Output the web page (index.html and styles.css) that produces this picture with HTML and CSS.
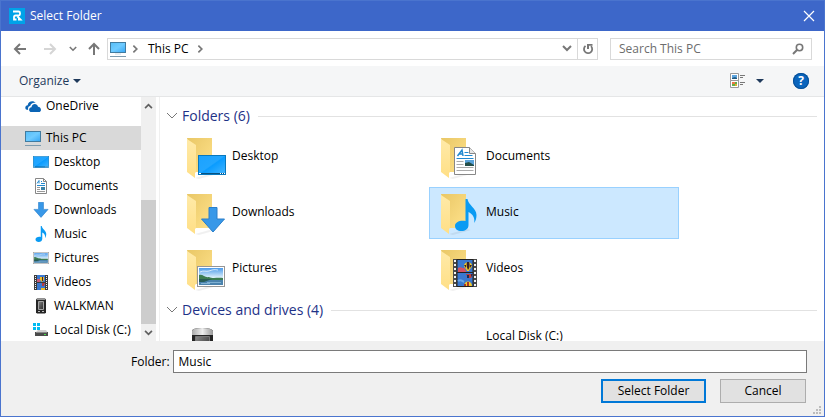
FILE: index.html
```html
<!DOCTYPE html>
<html lang="en">
<head>
<meta charset="utf-8">
<title>Select Folder</title>
<link rel="stylesheet" href="styles.css">
</head>
<body>
<svg class="defs" aria-hidden="true">
  <defs>
    <linearGradient id="g-screen" x1="0" y1="0" x2="1" y2="1"><stop offset="0" stop-color="#55bdf7"/><stop offset=".5" stop-color="#6fcbff"/><stop offset="1" stop-color="#35a6f5"/></linearGradient>
    <linearGradient id="g-desk" x1="0" y1="0" x2="1" y2="1"><stop offset="0" stop-color="#1ba2ff"/><stop offset=".48" stop-color="#22a6ff"/><stop offset=".52" stop-color="#0a9cff"/><stop offset="1" stop-color="#46b6ff"/></linearGradient>
    <linearGradient id="g-back" x1="0" y1="0" x2="1" y2="1"><stop offset="0" stop-color="#e9c766"/><stop offset="1" stop-color="#ffe28b"/></linearGradient>
    <linearGradient id="g-front" x1="0" y1="0" x2="0" y2="1"><stop offset="0" stop-color="#ffeaa8"/><stop offset="1" stop-color="#ffdf86"/></linearGradient>
    <linearGradient id="g-sky" x1="0" y1="0" x2="0" y2="1"><stop offset="0" stop-color="#4b9bea"/><stop offset=".6" stop-color="#e6f5fd"/></linearGradient>
    <linearGradient id="g-phone" x1="0" y1="0" x2="1" y2="1"><stop offset="0" stop-color="#8a8a8a"/><stop offset=".5" stop-color="#555"/><stop offset="1" stop-color="#2c2c2c"/></linearGradient>
    <linearGradient id="g-cap" x1="0" y1="0" x2="1" y2="0"><stop offset="0" stop-color="#aaa"/><stop offset=".5" stop-color="#eee"/><stop offset="1" stop-color="#999"/></linearGradient>
  </defs>
  <symbol id="pc" viewBox="0 0 16 16">
    <rect x=".5" y="1.5" width="15" height="10" fill="url(#g-screen)" stroke="#417b9f"/>
    <path d="M5 13h6" stroke="#cddbe3"/><path d="M0 15.500h16" stroke="#7d9bae"/>
  </symbol>
  <symbol id="desktop" viewBox="0 0 28 20">
    <rect x=".5" y=".5" width="27" height="19" fill="url(#g-desk)" stroke="#0878bd"/>
    <path d="M1 18.500h26" stroke="#07517f"/><path d="M1 18.500h2m19 0h1m1 0h1m1 0h1" stroke="#fff"/>
  </symbol>
  <symbol id="document" viewBox="0 0 22 28">
    <path d="M.5.5h15l6 6v21H.5z" fill="#fff" stroke="#878787"/><path d="M15.500.5v6h6" fill="#e6e6e6" stroke="#878787"/>
    <path d="M3.500 9 8 3l1 6M5 7h4" stroke="#2189cf" stroke-width="1.500" fill="none"/>
    <path d="M10.500 5.500h4M10.500 8.500h8M2.500 11.500h17" stroke="#2189cf"/>
    <path d="M2.500 14.500h7M2.500 17.500h7M2.500 20.500h17M2.500 23.500h17" stroke="#aaa"/>
    <path d="M11 13h9v6h-9z" fill="#5aa3db"/><path d="m11 16 4-1 5 3v1h-9z" fill="#244f49"/>
  </symbol>
  <symbol id="document-small" viewBox="0 0 16 16">
    <path d="M2.500.5h8l3 3v12h-11z" fill="#fff" stroke="#878787"/><path d="M10.500.5v3h3" fill="none" stroke="#878787"/>
    <path d="m4 5.500 2-3v3M8 3.500h1M8 5.500h4M4 7.500h8" stroke="#2189cf" fill="none"/>
    <path d="M4 9.500h3M4 11.500h3M4 13.500h8" stroke="#999"/><path d="M8 9h4v3H8z" fill="#3b82a8"/>
  </symbol>
  <symbol id="download" viewBox="0 0 24 26">
    <path d="M8 .5h8V12h7.500L12 25 .5 12H8z" fill="#3898e8" stroke="#2a7fca"/>
  </symbol>
  <symbol id="note" viewBox="0 0 22 32">
    <path d="M10.500 0h2c.5 6 9 9 9 16 0 3-.8 6-2.300 8 1-6-2-9-5.700-11v13c0 4-3.500 6-7 6-4 0-6.500-2-6.500-5 0-4 5-6 10.500-5z" fill="#0a9bf3"/>
  </symbol>
  <symbol id="picture" viewBox="0 0 28 21">
    <rect x=".5" y=".5" width="27" height="20" fill="#fff" stroke="#969696"/>
    <path d="M2 2h24v17H2z" fill="url(#g-sky)"/>
    <path d="M3 6c4-2 6 0 9-1s5-2 9-1" stroke="#fff" fill="none" opacity=".7"/>
    <path d="M2 9c4-1 6 3 10 2 4 2 9 0 14 1v2H2z" fill="#3c7d52"/><path d="M2 14h24v5H2z" fill="#4b83ad"/><path d="M2 13h13l-8 3H2z" fill="#285c54"/>
    <path d="M10 16.500h14M4 17.500h9" stroke="#7fb0d2"/>
  </symbol>
  <symbol id="film" viewBox="0 0 24 28">
    <path d="M0 0h24v28H0z" fill="#4a4a4a"/>
    <path d="M2 1v27M22 1v27" stroke="#f4f4f4" stroke-width="2" stroke-dasharray="2 2"/>
    <path d="M4 1h16v12H4zM4 14h16v13H4z" fill="#3a78cf"/><path d="M4 0v28M20 0v28M4 .5h16M4 13.500h16M4 27.500h16" stroke="#222"/>
    <path d="M5 9c3-2 5 1 7 0l1 4H5z" fill="#d45162"/>
    <path d="M11 7c0-5 8-5 8 0 0 2-3 3-3 5h-2c0-2-3-3-3-5z" fill="#f2c929"/><path d="M14 3c-1 3 0 6 1 8 2-2 2-6 1-8zM11 6h2v3zM19 6h-2v3z" fill="#36212c"/>
    <path d="M13 15h7l-2 4h-3z" fill="#c43e35"/><path d="M14 16h2v3h-2zM18 15h2l-2 3z" fill="#232c52"/>
    <path d="M11 27c0-6 8-6 8 0z" fill="#f2c929"/><path d="M14 23h2v4h-2zM11 25h2v2h-2z" fill="#a5362c"/>
    <path d="M5 22c3-2 4 0 6 1" stroke="#68a6e6" stroke-width="2" fill="none"/>
  </symbol>
  <symbol id="film-small" viewBox="0 0 16 16">
    <path d="M1 1h14v15H1z" fill="#3c3c3c"/><path d="M2.500 2v14M13.500 2v14" stroke="#f4f4f4" stroke-dasharray="1 1"/>
    <path d="M4 1h8v7H4zM4 9h8v7H4z" fill="#3a78cf"/><path d="M4 5h3v3H4z" fill="#c95b78"/><path d="M7 3h4v3L9 8 7 6z" fill="#edbd29"/><path d="M9 3h1v4H9z" fill="#45252a"/><path d="M9 9h3l-1 3H9z" fill="#b43b42"/><path d="M8 14h4v2H8z" fill="#edbd29"/>
  </symbol>
  <symbol id="phone" viewBox="0 0 16 16">
    <path d="M3 1.500 4 .5h8l1 1v13l-1 1H4l-1-1z" fill="#252525"/><path d="M4 1.500h8" stroke="#999"/><path d="M5.500 3.500h5v8h-5z" fill="url(#g-phone)" stroke="#a5a5a5"/><path d="M5 13.500h2m2 0h2" stroke="#bbb"/>
  </symbol>
  <symbol id="disk" viewBox="0 0 16 16">
    <path d="M0 1h3v3H0zM4 1h3v3H4zM0 5h3v3H0zM4 5h3v3H4z" fill="#00bcf2"/>
    <path d="m4 9 1-1h8l2 3H2z" fill="#cfcfcf"/><path d="M2 10h13v4H2z" fill="#4b4b4b"/><path d="M3 10.500h11" stroke="#888"/><path d="M11 12.500h2" stroke="#4bdc4b"/>
  </symbol>
  <symbol id="cloud" viewBox="0 0 16 16">
    <path d="M1 11.500C-.5 9.500.6 7.500 2.700 7.300 3 3.500 8.200 1.700 10.700 5 8 4.300 5.600 5.700 5.200 8 3.300 8.200 2.700 10 3.200 12z" fill="#0b64b5"/>
    <path d="M5.500 14C3.300 13 3.800 9.300 6.500 9.200 7 5.300 12.200 5 13 8.800c3 .2 4 4 1.700 5.200z" fill="#0b64b5"/>
  </symbol>
  <symbol id="folder" viewBox="0 0 34 42">
    <path d="m8 40 18-5 4 1-18 5z" fill="#000" opacity=".06"/>
    <path d="M0 0h25v34H6z" fill="url(#g-back)"/><path d="m0 1 9 6v27l-1 1v5l-8-6z" fill="url(#g-front)"/>
  </symbol>
  <symbol id="chevron" viewBox="0 0 12 8"><path d="m1 1 5 5 5-5" fill="none" stroke="currentColor"/></symbol>
  <symbol id="chevron-bold" viewBox="0 0 10 7"><path d="m1 1 4 4 4-4" fill="none" stroke="currentColor" stroke-width="2"/></symbol>
  <symbol id="caret" viewBox="0 0 8 4"><path d="M0 0h8L4 4z" fill="currentColor"/></symbol>
  <symbol id="arrow" viewBox="0 0 14 12"><path d="M13 6H2m5-5L2 6l5 5" fill="none" stroke="currentColor" stroke-width="2"/></symbol>
</svg>

<div class="dialog">
  <header class="titlebar">
    <svg class="logo" viewBox="0 0 16 16"><path d="M0 0h16v16H0z" fill="#00a2e8"/><path d="M4 3.500h5.500q1.500 0 1.500 1.500v1q0 1.500-1.500 1.500H6.500Q5 7.500 5 9v2.500h2.500M8.500 8.500l3 3H9" fill="none" stroke="#fff" stroke-width="1.800"/></svg>
    <h1>Select Folder</h1>
    <button class="close" aria-label="Close"><svg viewBox="0 0 10 10"><path d="m0 0 10 10M10 0 0 10" stroke="#fff" stroke-width="1.200"/></svg></button>
  </header>

  <nav class="navbar">
    <button class="arrow" aria-label="Back"><svg><use href="#arrow"/></svg></button>
    <button class="arrow forward" aria-label="Forward" disabled><svg><use href="#arrow"/></svg></button>
    <button class="recent" aria-label="Recent locations"><svg><use href="#chevron-bold"/></svg></button>
    <button class="arrow up" aria-label="Up"><svg><use href="#arrow"/></svg></button>
    <div class="address">
      <svg class="icon"><use href="#pc"/></svg>
      <svg class="crumb"><use href="#chevron-bold"/></svg>
      <button class="place">This PC</button>
      <svg class="crumb"><use href="#chevron-bold"/></svg>
      <button class="history" aria-label="Previous locations"><svg><use href="#chevron-bold"/></svg></button>
      <button class="refresh" aria-label="Refresh"><svg viewBox="0 0 12 12"><path d="M9 3.200A4.100 4.100 0 1 1 3.500 2.900" fill="none" stroke="#777" stroke-width="1.800"/><path d="M5 1h5.500v1.800H7V6H5z" fill="#777"/></svg></button>
    </div>
    <div class="search">
      <input type="text" aria-label="Search This PC" placeholder="Search This PC">
      <svg viewBox="0 0 12 12"><circle cx="7.500" cy="4.500" r="3.200" fill="none" stroke="#777" stroke-width="1.600"/><path d="M5.200 6.800 1 11" stroke="#777" stroke-width="2"/></svg>
    </div>
  </nav>

  <div class="toolbar">
    <button class="organize">Organize <svg><use href="#caret"/></svg></button>
    <button class="view" aria-label="Change your view">
      <svg class="view-icon" viewBox="0 0 16 16"><path d="M.5.5h8v7h-8zM.5 7.500h8v7h-8z" fill="#fff" stroke="#999"/><path d="M2 2h5v4H2z" fill="#5da5e0"/><path d="m2 5 3-1 2 1v1H2z" fill="#225b82"/><path d="M2 9h5v4H2z" fill="#62ad49"/><path d="M2 9h3v2H2z" fill="#ed7545"/><path d="M5 11h2v2H5z" fill="#e3b02e"/><path d="M10 2.500h5M10 4.500h3M10 9.500h5M10 11.500h3" stroke="#777"/></svg>
      <svg class="view-caret"><use href="#caret"/></svg>
    </button>
    <button class="help" aria-label="Help">?</button>
  </div>

  <div class="content">
    <aside class="sidebar">
      <ul class="tree">
        <li class="root onedrive"><svg><use href="#cloud"/></svg>OneDrive</li>
        <li class="root current"><svg><use href="#pc"/></svg>This PC</li>
        <li><svg class="wide"><use href="#desktop"/></svg>Desktop</li>
        <li><svg><use href="#document-small"/></svg>Documents</li>
        <li><svg><use href="#download"/></svg>Downloads</li>
        <li><svg><use href="#note"/></svg>Music</li>
        <li><svg><use href="#picture"/></svg>Pictures</li>
        <li><svg><use href="#film-small"/></svg>Videos</li>
        <li><svg><use href="#phone"/></svg>WALKMAN</li>
        <li><svg><use href="#disk"/></svg>Local Disk (C:)</li>
      </ul>
      <div class="scrollbar">
        <button class="scroll-up" aria-label="Scroll up"><svg><use href="#chevron-bold"/></svg></button>
        <div class="track"><div class="thumb"></div></div>
        <button aria-label="Scroll down"><svg><use href="#chevron-bold"/></svg></button>
      </div>
    </aside>

    <main class="files">
      <section>
        <h2><svg><use href="#chevron"/></svg>Folders (6)</h2>
        <div class="grid">
          <div class="item"><svg viewBox="0 0 40 42"><use href="#folder" width="34" height="42"/><use href="#desktop" x="11" y="17" width="28" height="20"/></svg>Desktop</div>
          <div class="item"><svg viewBox="0 0 40 42"><use href="#folder" width="34" height="42"/><use href="#document" x="13" y="9" width="22" height="28"/></svg>Documents</div>
          <div class="item"><svg viewBox="0 0 40 42"><use href="#folder" width="34" height="42"/><use href="#download" x="14" y="13" width="24" height="26"/></svg>Downloads</div>
          <div class="item selected"><svg viewBox="0 0 40 42"><use href="#folder" width="34" height="42"/><use href="#note" x="14" y="5" width="22" height="32"/></svg>Music</div>
          <div class="item"><svg viewBox="0 0 40 42"><use href="#folder" width="34" height="42"/><use href="#picture" x="10" y="16" width="28" height="21"/></svg>Pictures</div>
          <div class="item"><svg viewBox="0 0 40 42"><use href="#folder" width="34" height="42"/><use href="#film" x="12" y="9" width="24" height="28"/></svg>Videos</div>
        </div>
      </section>
      <section>
        <h2><svg><use href="#chevron"/></svg>Devices and drives (4)</h2>
        <div class="grid">
          <div class="item drive"><svg viewBox="0 0 40 42"><path d="M5 3Q5 0 15 0t11 3v37H5z" fill="#252525"/><path d="M5 3Q5 0 15 0t11 3v4H5z" fill="url(#g-cap)"/><path d="M8.500 8.500h14v22h-14z" fill="url(#g-phone)" stroke="#777"/></svg></div>
          <div class="item drive"><svg viewBox="0 0 40 42"></svg>Local Disk (C:)</div>
        </div>
      </section>
    </main>
  </div>

  <footer class="footer">
    <div class="field">
      <label for="folder-name">Folder:</label>
      <input id="folder-name" type="text" value="Music">
    </div>
    <div class="actions">
      <button class="primary">Select Folder</button>
      <button class="cancel">Cancel</button>
    </div>
    <svg class="grip" viewBox="0 0 8 8"><path d="M6 0h2v2H6zM3 3h2v2H3zM6 3h2v2H6zM0 6h2v2H0zM3 6h2v2H3zM6 6h2v2H6z" fill="#bcbcbc"/></svg>
  </footer>
</div>
</body>
</html>
```
FILE: styles.css
```css
* { box-sizing: border-box; }

body {
  margin: 0;
  font: 12px/16px "Open Sans", "Noto Sans", sans-serif;
  color: #000;
}

button, input { font: inherit; color: inherit; margin: 0; }
button { padding: 0; border: 0; background: none; display: flex; align-items: center; justify-content: center; }
h1, h2, ul { margin: 0; padding: 0; font-weight: normal; list-style: none; }
svg { display: block; flex: none; }
.defs { position: absolute; width: 0; height: 0; }

.dialog {
  display: flex;
  flex-direction: column;
  height: 100vh;
  border: 1px solid #4a74ce;
  background: #fff;
}

/* Title bar */
.titlebar { display: flex; align-items: center; flex: none; height: 30px; padding-left: 8px; background: #3d67c9; color: #fff; }
.logo { width: 16px; height: 16px; margin-right: 5px; }
.titlebar h1 { flex: 1; font-size: 12px; }
.close { width: 30px; height: 30px; }
.close svg { width: 10px; height: 10px; overflow: visible; }

/* Navigation */
.navbar { display: flex; align-items: center; flex: none; height: 35px; padding: 0 12px; color: #777; }
.arrow svg { width: 14px; height: 12px; }
.forward { margin-left: 16px; color: #d5d5d5; }
.forward svg { transform: scaleX(-1); }
.recent { margin: 0 10px 0 12px; }
.recent svg { width: 8px; height: 6px; }
.up { margin-right: 6px; }
.up svg { transform: rotate(90deg); }
.address, .search { display: flex; align-items: center; height: 22px; border: 1px solid #d9d9d9; }
.address { flex: 1; padding-left: 2px; margin-right: 12px; }
.icon { width: 16px; height: 16px; }
.crumb { width: 9px; height: 6px; margin: 0 5px; transform: rotate(-90deg); }
.place { margin: 0 2px 0 3px; color: #000; }
.history { width: 20px; height: 20px; margin-left: auto; }
.history svg { width: 10px; height: 7px; }
.refresh { width: 20px; height: 20px; border-left: 1px solid #d9d9d9; }
.refresh svg { width: 12px; height: 12px; }
.search { width: 202px; padding: 0 7px 0 8px; }
.search input { flex: 1; min-width: 0; padding: 0; border: 0; outline: 0; background: none; }
.search input::placeholder { color: #6d6d6d; opacity: 1; }
.search svg { width: 12px; height: 12px; }

/* Toolbar */
.toolbar { display: flex; align-items: center; flex: none; height: 31px; padding: 0 15px 0 18px; background: #f5f6f7; border-bottom: 1px solid #e5e6e7; color: #1e395b; }
.organize { gap: 4px; }
.organize svg, .view-caret { width: 8px; height: 4px; }
.view { gap: 10px; margin-left: auto; }
.view-icon { width: 16px; height: 16px; }
.help { width: 16px; height: 16px; margin-left: 29px; border-radius: 50%; background: #0a65bd; box-shadow: inset 0 0 0 1px #084f96; color: #fff; font-weight: bold; }

/* Body */
.content { display: flex; flex: 1; min-height: 0; }
.sidebar { display: flex; flex: none; width: 159px; padding-right: 3px; border-right: 1px solid #f0f0f0; }
.tree { flex: 1; overflow: hidden; }
.tree li { display: flex; align-items: center; gap: 5px; height: 24px; padding-left: 32px; white-space: nowrap; }
.tree .root { padding-left: 24px; }
.tree svg { width: 16px; height: 16px; }
.tree .wide { height: 12px; }
.tree .onedrive { height: 18px; margin-bottom: 11px; }
.tree .current { background: #d9d9d9; }
.scrollbar { display: flex; flex-direction: column; width: 15px; background: #f0f0f0; color: #606060; }
.scrollbar button { height: 17px; }
.scrollbar svg { width: 9px; height: 6px; }
.scroll-up svg { transform: rotate(180deg); }
.track { display: flex; flex: 1; flex-direction: column; justify-content: flex-end; }
.thumb { height: 59%; background: #cdcdcd; }

.files { flex: 1; min-width: 0; overflow: hidden; padding: 8px 7px 0 6px; }
.files h2 { display: flex; align-items: center; height: 22px; font-size: 14px; line-height: 20px; color: #1e3287; }
.files h2 svg { width: 12px; height: 8px; margin-right: 4px; color: #777; }
.files h2::after { content: ""; flex: 1; height: 1px; margin-left: 8px; background: #e2e2e2; }
.grid { display: grid; grid-template-columns: repeat(auto-fill, 250px); gap: 4px; padding: 4px 9px; }
.item { display: flex; align-items: center; gap: 5px; height: 52px; padding: 0 11px 2px; border: 1px solid transparent; }
.item svg { width: 40px; height: 42px; align-self: flex-start; margin-top: 6px; }
.item.drive { align-items: flex-start; padding-top: 2px; }
.item.drive svg { margin-top: 0; }
.selected { background: #cce8ff; border-color: #99d1ff; }

/* Footer */
.footer { position: relative; flex: none; height: 75px; padding: 9px 17px 0 130px; background: #f0f0f0; }
.field { display: flex; align-items: center; gap: 3px; }
.field input { flex: 1; min-width: 0; height: 23px; padding: 0 5px; border: 1px solid #7a7a7a; background: #fff; }
.actions { display: flex; justify-content: flex-end; gap: 14px; padding: 6px 1px 0 0; }
.actions button { height: 24px; border: 1px solid #adadad; background: #e1e1e1; }
.actions .primary { width: 105px; border: 2px solid #0078d7; }
.actions .cancel { width: 86px; }
.grip { position: absolute; right: 3px; bottom: 2px; width: 8px; height: 8px; }
```
